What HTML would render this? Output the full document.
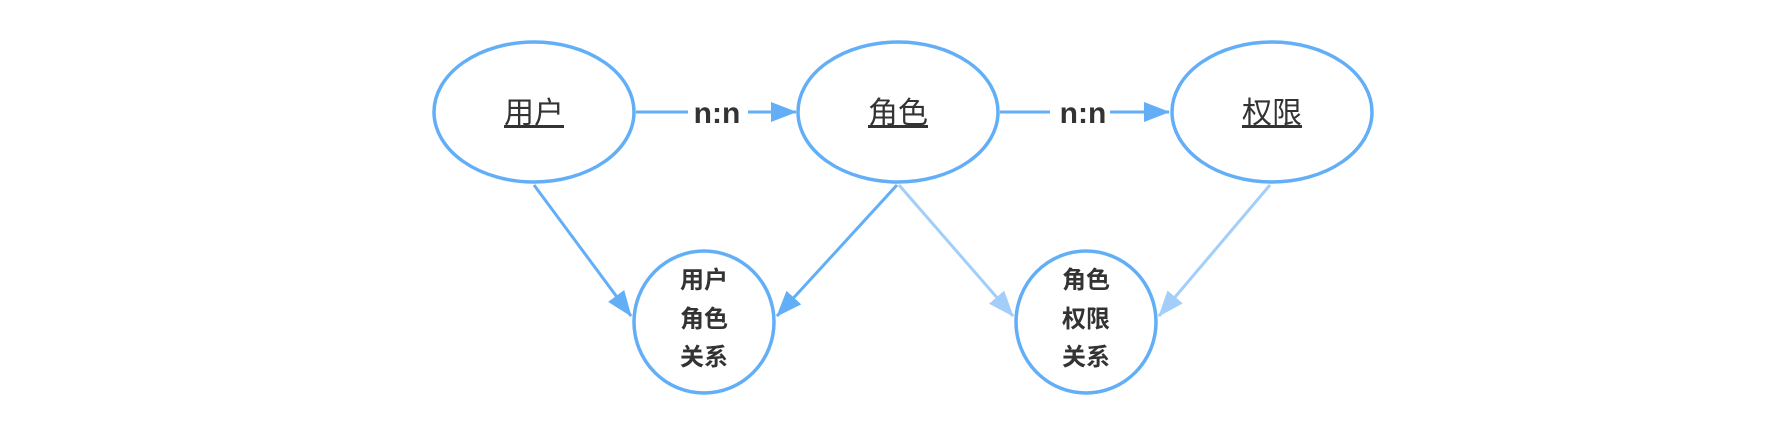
<!DOCTYPE html>
<html><head><meta charset="utf-8"><style>
html,body{margin:0;padding:0;background:#fff;width:1780px;height:430px;overflow:hidden}
</style></head><body>
<svg width="1780" height="430" xmlns="http://www.w3.org/2000/svg" style="font-family:'Liberation Sans','Noto Sans CJK SC',sans-serif">
<defs>
<marker id="b" markerWidth="26" markerHeight="20" refX="25" refY="10" orient="auto" markerUnits="userSpaceOnUse"><path d="M0,0 L26,10 L0,20 Z" fill="#62aff7"/></marker>
<marker id="c" markerWidth="26" markerHeight="20" refX="25" refY="10" orient="auto" markerUnits="userSpaceOnUse"><path d="M0,0 L26,10 L0,20 Z" fill="#a2cef9"/></marker>
</defs>
<g fill="none" stroke-width="3">
<line x1="636" y1="112" x2="796" y2="112" stroke="#62aff7" marker-end="url(#b)"/>
<line x1="1000" y1="112" x2="1169" y2="112" stroke="#62aff7" marker-end="url(#b)"/>
<line x1="534" y1="185" x2="631" y2="316" stroke="#62aff7" marker-end="url(#b)"/>
<line x1="897" y1="185" x2="777" y2="316" stroke="#62aff7" marker-end="url(#b)"/>
<line x1="899" y1="185" x2="1013" y2="316" stroke="#a2cef9" marker-end="url(#c)"/>
<line x1="1270" y1="185" x2="1159" y2="316" stroke="#a2cef9" marker-end="url(#c)"/>
</g>
<rect x="688" y="96" width="60" height="34" fill="#fff"/>
<rect x="1050" y="96" width="60" height="34" fill="#fff"/>
<g fill="#fff" stroke="#62aff7" stroke-width="3.5">
<ellipse cx="534" cy="112" rx="100" ry="70"/>
<ellipse cx="898" cy="112" rx="100" ry="70"/>
<ellipse cx="1272" cy="112" rx="100" ry="70"/>
<ellipse cx="704" cy="322" rx="70" ry="71"/>
<ellipse cx="1086" cy="322" rx="70" ry="71"/>
</g>
<g fill="#333" text-anchor="middle" font-size="30">
<text x="534" y="123" text-decoration="underline">用户</text>
<text x="898" y="123" text-decoration="underline">角色</text>
<text x="1272" y="123" text-decoration="underline">权限</text>
<text x="717" y="123" font-weight="bold" font-size="30">n:n</text>
<text x="1083" y="123" font-weight="bold" font-size="30">n:n</text>
</g>
<g fill="#333" text-anchor="middle" font-size="24" font-weight="bold">
<text x="704" y="288">用户</text><text x="704" y="327">角色</text><text x="704" y="365">关系</text>
<text x="1086" y="288">角色</text><text x="1086" y="327">权限</text><text x="1086" y="365">关系</text>
</g>
</svg>
</body></html>
